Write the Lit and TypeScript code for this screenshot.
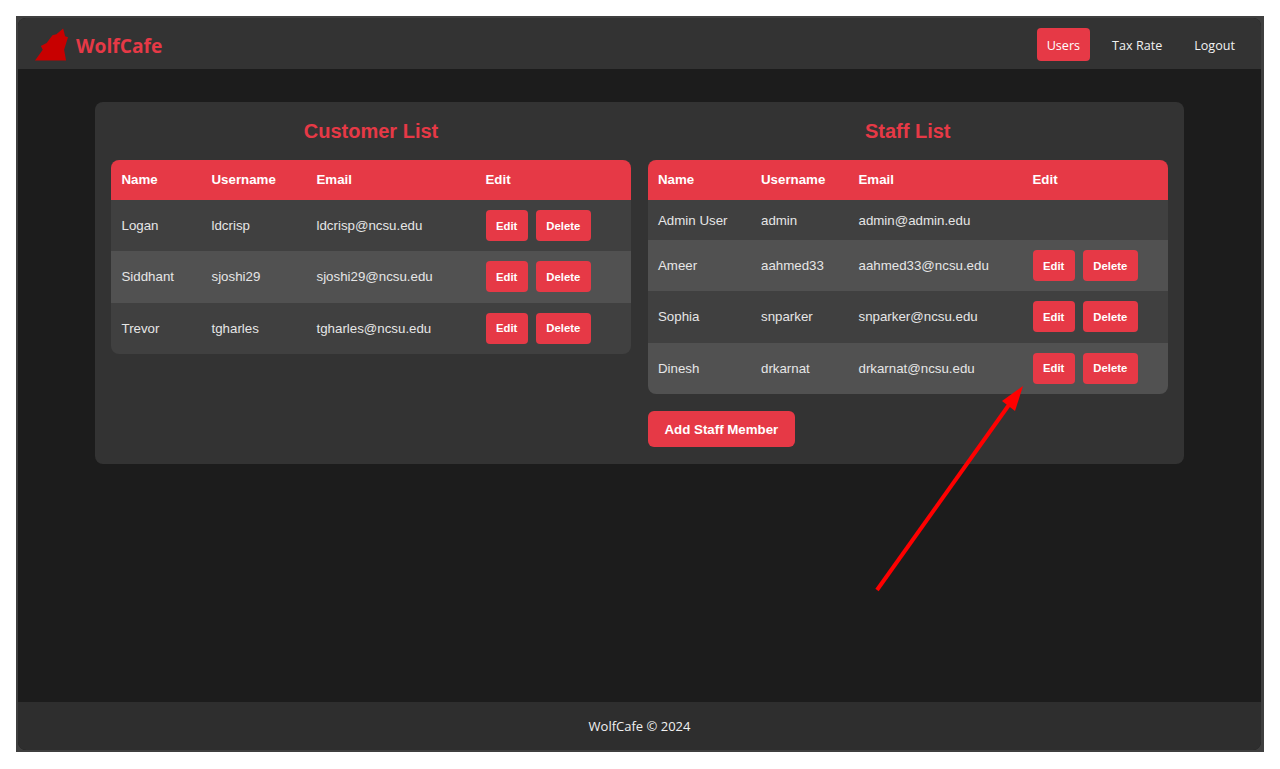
import { LitElement, html, css } from 'lit';
import { customElement } from 'lit/decorators.js';

const customers = [
  ['Logan', 'ldcrisp', 'ldcrisp@ncsu.edu'],
  ['Siddhant', 'sjoshi29', 'sjoshi29@ncsu.edu'],
  ['Trevor', 'tgharles', 'tgharles@ncsu.edu'],
];

const staff = [
  ['Admin User', 'admin', 'admin@admin.edu'],
  ['Ameer', 'aahmed33', 'aahmed33@ncsu.edu'],
  ['Sophia', 'snparker', 'snparker@ncsu.edu'],
  ['Dinesh', 'drkarnat', 'drkarnat@ncsu.edu'],
];

@customElement('app-root')
export class AppRoot extends LitElement {
  static styles = css`
    :host {
      display: block;
      box-sizing: border-box;
      height: 769px;
      padding: 16px 16px 17px;
      background: #fff;
      font-family: 'Liberation Sans', Arial, sans-serif;
    }
    .frame {
      position: relative;
      height: 100%;
      box-sizing: border-box;
      border: solid #3f3f3f;
      border-width: 2px 3px 2px 2px;
      background: #3f3f3f;
    }
    .inner {
      display: flex;
      flex-direction: column;
      height: 100%;
      border-radius: 8px;
      overflow: hidden;
      background: #1c1c1c;
    }
    .navbar {
      display: flex;
      align-items: center;
      height: 51px;
      box-sizing: border-box;
      flex: none;
      padding: 2px 16px 0 17px;
      background: #333;
      font-family: 'Open Sans', sans-serif;
    }
    .brand {
      display: flex;
      align-items: center;
      gap: 8px;
      color: #e63946;
      font-size: 19.2px;
      font-weight: 700;
    }
    .brand span {
      padding-top: 2px;
    }
    .links {
      display: flex;
      align-items: center;
      gap: 12px;
      margin-left: auto;
    }
    .link {
      padding: 9px 10px 7px;
      border-radius: 4px;
      color: #f1f1f1;
      font-size: 12.6px;
      line-height: 17px;
    }
    .link.active {
      background: #e63946;
      color: #fff;
    }
    main {
      flex: 1;
      padding: 33px 77px 0;
    }
    .card {
      display: grid;
      grid-template-columns: 520px 519.5px;
      gap: 17px;
      padding: 16px;
      border-radius: 8px;
      background: #333;
      height: 362px;
      box-sizing: border-box;
    }
    h2 {
      margin: 0 0 16px;
      color: #e63946;
      font-size: 20px;
      line-height: 26px;
      font-weight: 700;
      text-align: center;
    }
    .table-wrap {
      border-radius: 8px;
      overflow: hidden;
    }
    table {
      width: 100%;
      table-layout: fixed;
      border-collapse: collapse;
      font-size: 13.3px;
    }
    th {
      height: 38px;
      padding: 0 0 2px 10.5px;
      background: #e63946;
      color: #fff;
      font-weight: 700;
      text-align: left;
    }
    td {
      padding: 0 0 0 10.5px;
      color: #e6e6e6;
      height: 40px;
    }
    tr.has-actions td {
      height: 51.33px;
    }
    tbody tr:nth-child(odd) {
      background: #404040;
    }
    tbody tr:nth-child(even) {
      background: #515151;
    }
    .customers .c1 { width: 90px; }
    .customers .c2 { width: 105px; }
    .customers .c3 { width: 169px; }
    .staff th:first-child,
    .staff td:first-child { padding-left: 10px; }
    .staff .c1 { width: 102.5px; }
    .staff .c2 { width: 97.5px; }
    .staff .c3 { width: 174px; }
    .actions {
      display: flex;
      gap: 8px;
    }
    button {
      height: 31px;
      padding: 0 10.5px;
      border: 0;
      border-radius: 4px;
      background: #e63946;
      color: #fff;
      font-family: inherit;
      font-size: 11.3px;
      font-weight: 700;
    }
    .add {
      height: 36px;
      margin-top: 17px;
      padding: 1px 16.5px 0;
      border-radius: 6px;
      font-size: 13.3px;
    }
    footer {
      flex: none;
      height: 48px;
      display: flex;
      align-items: center;
      justify-content: center;
      background: #2e2e2e;
      color: #f1f1f1;
      font-family: 'Open Sans', sans-serif;
      font-size: 13px;
    }
    .arrow {
      position: absolute;
      left: -18px;
      top: -18px;
      pointer-events: none;
    }
  `;

  private rows(list: string[][]) {
    return list.map(
      (r) => html`<tr class=${r[1] === 'admin' ? '' : 'has-actions'}>
        <td>${r[0]}</td>
        <td>${r[1]}</td>
        <td>${r[2]}</td>
        <td>
          ${r[1] === 'admin'
            ? ''
            : html`<div class="actions"><button>Edit</button><button>Delete</button></div>`}
        </td>
      </tr>`
    );
  }

  private table(cls: string, list: string[][]) {
    return html`<div class="table-wrap ${cls}">
      <table>
        <colgroup><col class="c1" /><col class="c2" /><col class="c3" /><col /></colgroup>
        <thead>
          <tr><th>Name</th><th>Username</th><th>Email</th><th>Edit</th></tr>
        </thead>
        <tbody>${this.rows(list)}</tbody>
      </table>
    </div>`;
  }

  render() {
    return html`<div class="frame">
      <div class="inner">
        <header class="navbar">
          <div class="brand">
            <svg width="33" height="34" viewBox="34 28 34 34">
              <path
                fill="#c80000"
                d="M34 61 L42 50 L40 46 L46 43 L52 35 L56 34 L63 28 L65 36 L68 37 L64 50 L66 61 Z"
              />
            </svg>
            <span>WolfCafe</span>
          </div>
          <nav class="links">
            <span class="link active">Users</span>
            <span class="link">Tax Rate</span>
            <span class="link">Logout</span>
          </nav>
        </header>
        <main>
          <section class="card">
            <div>
              <h2>Customer List</h2>
              ${this.table('customers', customers)}
            </div>
            <div>
              <h2>Staff List</h2>
              ${this.table('staff', staff)}
              <button class="add">Add Staff Member</button>
            </div>
          </section>
        </main>
        <footer>WolfCafe © 2024</footer>
      </div>
      <svg class="arrow" width="1280" height="769">
        <line x1="877" y1="590" x2="1011" y2="402" stroke="#ff0000" stroke-width="4" />
        <polygon points="1023,386 1002,401 1015,411" fill="#ff0000" />
      </svg>
    </div>`;
  }
}
